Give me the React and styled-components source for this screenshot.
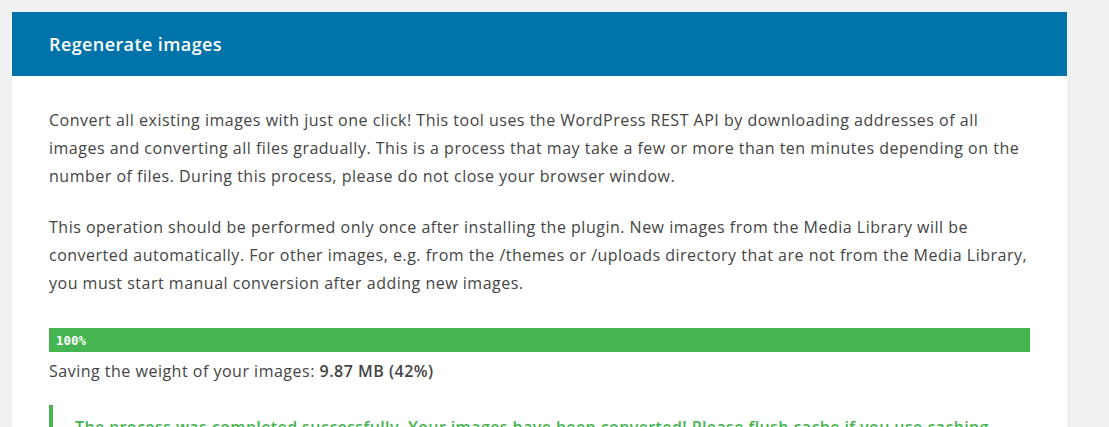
import React from 'react'
import styled, { createGlobalStyle } from 'styled-components'

const GlobalStyle = createGlobalStyle`
  html, body {
    margin: 0;
    padding: 0;
    background: #f1f1f1;
  }
  body {
    font-family: 'Open Sans', 'Liberation Sans', sans-serif;
    color: #444;
  }
`

const Page = styled.div`
  padding: 12px 42px 0 12px;
  height: 427px;
  box-sizing: border-box;
  overflow: hidden;
`

const Panel = styled.section`
  background: #fff;
`

const PanelHeader = styled.header`
  background: #0073aa;
  height: 64px;
  display: flex;
  align-items: center;
  padding: 0 37px;
`

const PanelTitle = styled.h2`
  margin: 0;
  color: #fff;
  font-size: 18px;
  font-weight: 600;
  letter-spacing: 0.4px;
`

const PanelBody = styled.div`
  padding: 30px 37px 20px;
`

const Text = styled.p`
  margin: 0 0 23px;
  font-size: 16px;
  line-height: 28px;
  letter-spacing: 0.5px;
  color: #444;
`

const Progress = styled.div`
  margin-top: 31px;
  height: 24px;
  background: #46b450;
  display: flex;
  align-items: center;
  padding: 0 7px;
`

const ProgressLabel = styled.span`
  font-family: 'DejaVu Sans Mono', 'Liberation Mono', monospace;
  font-size: 12.5px;
  font-weight: bold;
  color: #fff;
`

const Stats = styled.p`
  margin: 5px 0 0;
  font-size: 16px;
  line-height: 28px;
  letter-spacing: 0.5px;
  color: #444;

  & strong {
    font-weight: 600;
  }
`

const Notice = styled.div`
  margin-top: 20px;
  border-left: 4px solid #46b450;
  padding: 10px 0 10px 22px;
`

const NoticeText = styled.p`
  margin: 0;
  font-size: 16px;
  line-height: 24px;
  font-weight: 600;
  letter-spacing: 0.4px;
  color: #46b450;
`

const App = () => {
  return (
    <>
      <GlobalStyle />
      <Page>
        <Panel>
          <PanelHeader>
            <PanelTitle>Regenerate images</PanelTitle>
          </PanelHeader>
          <PanelBody>
            <Text>
              Convert all existing images with just one click! This tool uses the WordPress REST API by downloading addresses of all
              <br />
              images and converting all files gradually. This is a process that may take a few or more than ten minutes depending on the
              <br />
              number of files. During this process, please do not close your browser window.
            </Text>
            <Text>
              This operation should be performed only once after installing the plugin. New images from the Media Library will be
              <br />
              converted automatically. For other images, e.g. from the /themes or /uploads directory that are not from the Media Library,
              <br />
              you must start manual conversion after adding new images.
            </Text>
            <Progress>
              <ProgressLabel>100%</ProgressLabel>
            </Progress>
            <Stats>
              Saving the weight of your images: <strong>9.87 MB (42%)</strong>
            </Stats>
            <Notice>
              <NoticeText>
                The process was completed successfully. Your images have been converted! Please flush cache if you use caching
              </NoticeText>
            </Notice>
          </PanelBody>
        </Panel>
      </Page>
    </>
  )
}

export default App
